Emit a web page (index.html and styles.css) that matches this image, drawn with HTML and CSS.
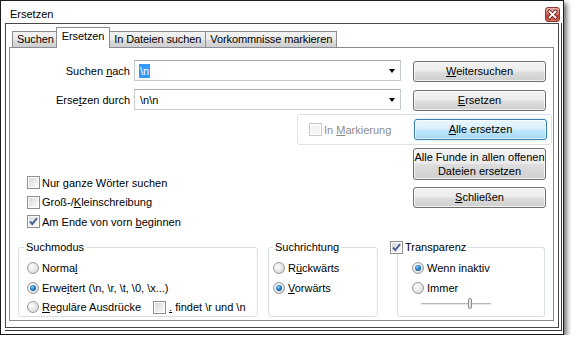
FILE: index.html
```html
<!DOCTYPE html>
<html lang="de">
<head>
    <meta charset="UTF-8">
    <title>Ersetzen</title>
    <link rel="stylesheet" href="styles.css">
</head>
<body>
    <div class="window">
        <!-- Titelleiste -->
        <div class="titlebar">
            <span class="title">Ersetzen</span>
            <span class="close-btn">
                <svg width="13" height="13" viewBox="0 0 13 13">
                    <path d="M3.5 3.5 L9.5 9.5 M9.5 3.5 L3.5 9.5" stroke="#6b2118" stroke-width="3.6" stroke-linecap="square"/>
                    <path d="M3.5 3.5 L9.5 9.5 M9.5 3.5 L3.5 9.5" stroke="#fff" stroke-width="1.8" stroke-linecap="square"/>
                </svg>
            </span>
        </div>

        <div class="frame-outer">
            <div class="frame">
                <!-- Reiter -->
                <div class="tabs">
                    <div class="tab">Suchen</div>
                    <div class="tab active">Ersetzen</div>
                    <div class="tab">In Dateien suchen</div>
                    <div class="tab">Vorkommnisse markieren</div>
                </div>

                <div class="panel">
                    <div class="main">
                        <div class="field-row">
                            <label class="field-label">Suchen <u>n</u>ach</label>
                            <div class="combo"><span class="selected-text">\n</span><span class="arrow"></span></div>
                            <button class="btn"><u>W</u>eitersuchen</button>
                        </div>
                        <div class="field-row second">
                            <label class="field-label">Erse<u>t</u>zen durch</label>
                            <div class="combo"><span class="combo-text">\n\n</span><span class="arrow"></span></div>
                            <button class="btn"><u>E</u>rsetzen</button>
                        </div>

                        <div class="mark-group">
                            <span class="check disabled"></span>
                            <span class="disabled-text">In <u>M</u>arkierung</span>
                            <button class="btn default"><u>A</u>lle ersetzen</button>
                        </div>

                        <div class="lower">
                            <div class="options">
                                <div class="option"><span class="check"></span><span>Nur <u>g</u>anze Wörter suchen</span></div>
                                <div class="option"><span class="check"></span><span>Groß-/<u>K</u>leinschreibung</span></div>
                                <div class="option">
                                    <span class="check">
                                        <svg width="11" height="11" viewBox="0 0 11 11"><path d="M2 5.5 L4.3 8 L9 2.2" fill="none" stroke="#4a5f97" stroke-width="1.9"/></svg>
                                    </span><span>Am Ende von vorn <u>b</u>eginnen</span>
                                </div>
                            </div>
                            <div class="side">
                                <button class="btn tall">Alle Funde in allen offenen<br>Dateien ersetzen</button>
                                <button class="btn"><u>S</u>chließen</button>
                            </div>
                        </div>
                    </div>

                    <!-- Gruppen unten -->
                    <div class="groups">
                        <fieldset class="group mode">
                            <legend>Suchmodus</legend>
                            <div class="option"><span class="radio"></span><span>Norma<u>l</u></span></div>
                            <div class="option"><span class="radio on"></span><span>Erwe<u>i</u>tert (\n, \r, \t, \0, \x...)</span></div>
                            <div class="option"><span class="radio"></span><span><u>R</u>eguläre Ausdrücke</span><span class="check dot-check"></span><span><u>.</u> findet \r und \n</span></div>
                        </fieldset>
                        <fieldset class="group direction">
                            <legend>Suchrichtung</legend>
                            <div class="option"><span class="radio"></span><span>R<u>ü</u>ckwärts</span></div>
                            <div class="option"><span class="radio on"></span><span><u>V</u>orwärts</span></div>
                        </fieldset>
                        <fieldset class="group transparency">
                            <legend>
                                <span class="check">
                                    <svg width="11" height="11" viewBox="0 0 11 11"><path d="M2 5.5 L4.3 8 L9 2.2" fill="none" stroke="#4a5f97" stroke-width="1.9"/></svg>
                                </span><span>Transparenz</span>
                            </legend>
                            <div class="option"><span class="radio on"></span><span>Wenn inaktiv</span></div>
                            <div class="option"><span class="radio"></span><span>Immer</span></div>
                            <div class="slider"><span class="thumb"></span></div>
                        </fieldset>
                    </div>
                </div>
            </div>
        </div>
    </div>
</body>
</html>
```

FILE: styles.css
```css
body {
    margin: 0;
    background-color: #fff;
    font-family: "Liberation Sans", Arial, sans-serif;
    font-size: 11px;
    color: #000;
}
u {
    text-decoration-thickness: 1px;
    text-underline-offset: 1px;
}
.window {
    width: 564px;
    height: 335px;
    box-sizing: border-box;
    border: 1px solid #1c1c1c;
    padding: 0 1px 3px 4px;
    background-color: #fff;
    box-shadow: 3px 3px 5px rgba(0, 0, 0, 0.55);
    display: flex;
    flex-direction: column;
}
.titlebar {
    height: 22px;
    flex: none;
    display: flex;
    align-items: flex-start;
    padding-left: 5px;
}
.title {
    padding-top: 6px;
    line-height: 14px;
}
.close-btn {
    margin: 6px 2px 0 auto;
    width: 15px;
    height: 15px;
    box-sizing: border-box;
    border: 1px solid #8a3a31;
    border-radius: 3px;
    background: linear-gradient(#eab0a6 0%, #d9776b 45%, #c4473a 55%, #cf6a5c 100%);
    display: flex;
    align-items: center;
    justify-content: center;
}
.frame-outer {
    flex: 1;
    display: flex;
    border-right: 1px solid #3a3a3a;
    border-bottom: 1px solid #3a3a3a;
    padding: 0 2px 2px 0;
}
.frame {
    flex: 1;
    display: flex;
    flex-direction: column;
    border: 1px solid #474747;
    padding: 0 4px 6px 3px;
}

/* Reiter */
.tabs {
    display: flex;
    align-items: flex-end;
    height: 23px;
    padding-left: 3px;
    letter-spacing: -0.1px;
}
.tab {
    height: 15px;
    line-height: 15px;
    padding: 0 4px;
    border: 1px solid #898c95;
    border-bottom: none;
    margin-right: -1px;
    background: linear-gradient(#f3f3f3 0%, #ebebeb 50%, #dddddd 51%, #cfcfcf 100%);
}
.tab.active {
    height: 20px;
    line-height: 17px;
    margin: 0 -1px -1px -2px;
    padding: 0 5px;
    background: #fff;
    position: relative;
    z-index: 1;
}
.panel {
    flex: 1;
    border: 1px solid #898c95;
    background-color: #fff;
}

/* Eingabezeilen und Knöpfe */
.main {
    width: 536px;
    margin-top: 12px;
}
.field-row {
    display: flex;
    align-items: center;
    height: 21px;
}
.field-row.second {
    margin-top: 8px;
}
.field-label {
    width: 120px;
    margin-right: 4px;
    text-align: right;
}
.combo {
    width: 267px;
    height: 21px;
    box-sizing: border-box;
    border: 1px solid #c5cbd3;
    border-top-color: #abadb3;
    display: flex;
    align-items: center;
    padding-left: 4px;
}
.selected-text {
    background-color: #3399ff;
    color: #fff;
    padding: 0 1px;
    line-height: 14px;
}
.combo-text {
    padding-left: 1px;
}
.arrow {
    margin: 1px 5px 0 auto;
    border-left: 3.5px solid transparent;
    border-right: 3.5px solid transparent;
    border-top: 4px solid #000;
}
.btn {
    width: 133px;
    height: 21px;
    margin: 1px 0 0 12px;
    padding: 0;
    border: 1px solid #707070;
    border-radius: 3px;
    background: linear-gradient(#f3f3f3 0%, #ebebeb 48%, #dddddd 52%, #cfcfcf 100%);
    box-shadow: inset 0 0 0 1px rgba(255, 255, 255, 0.7);
    font: inherit;
    color: #000;
    line-height: 15px;
}
.btn.default {
    border-color: #3c7fb1;
    background: linear-gradient(#eaf6fd 0%, #d9f0fc 48%, #bee6fd 52%, #a7d9f5 100%);
    box-shadow: inset 0 0 0 1px rgba(255, 255, 255, 0.6), 0 0 2px #9fd5f7;
}
.btn.tall {
    height: 32px;
    line-height: 14px;
    margin: 0;
}
.mark-group {
    width: 255px;
    height: 31px;
    box-sizing: border-box;
    margin: 4px 0 0 287px;
    border: 1px solid #dce2e8;
    border-radius: 3px;
    display: flex;
    align-items: center;
    padding: 0 4px 0 11px;
}
.mark-group .btn {
    margin: 0 0 0 auto;
}
.disabled-text {
    color: #8d8d8d;
}
.lower {
    display: flex;
    margin-top: 3px;
}
.options {
    margin-left: 17px;
    padding-top: 25px;
}
.option {
    height: 19.5px;
    display: flex;
    align-items: center;
    white-space: nowrap;
}
.side {
    margin-left: auto;
    display: flex;
    flex-direction: column;
    gap: 7px;
}
.side .btn {
    margin: 0;
}

/* Kästchen und Optionsfelder */
.check {
    width: 13px;
    height: 13px;
    box-sizing: border-box;
    border: 1px solid #8e8f8f;
    background: linear-gradient(135deg, #d6d6d6 0%, #f2f2f2 70%, #fdfdfd 100%);
    box-shadow: inset 0 0 0 1px #fff;
    margin-right: 2px;
    flex: none;
    display: flex;
    align-items: center;
    justify-content: center;
}
.check.disabled {
    border-color: #c9c9c9;
    background: #f4f4f4;
}
.check.dot-check {
    margin: 0 3px 0 12px;
}
.radio {
    width: 12px;
    height: 12px;
    box-sizing: border-box;
    border-radius: 50%;
    border: 1px solid #9a9a9a;
    background: radial-gradient(circle at 35% 35%, #fbfbfb 0%, #e6e6e6 55%, #cdcdcd 100%);
    margin-right: 3px;
    flex: none;
    display: flex;
    align-items: center;
    justify-content: center;
}
.radio.on::after {
    content: "";
    width: 6px;
    height: 6px;
    border-radius: 50%;
    background: radial-gradient(circle at 40% 35%, #8fd0f6 0%, #2a7fc4 45%, #0b3f7a 100%);
}

/* Gruppen */
.groups {
    display: flex;
    margin: 9px 0 0 8px;
}
.group {
    height: 76px;
    box-sizing: border-box;
    margin: 0;
    padding: 5px 0 0 8px;
    min-inline-size: 0;
    border: 1px solid #d5dfe5;
    border-radius: 3px;
}
.group legend {
    padding: 0 2px;
    margin-left: -3px;
    line-height: 13px;
    height: 13px;
}
.mode {
    width: 240px;
}
.direction {
    width: 110px;
    margin-left: 10px;
    padding-left: 4px;
}
.direction legend {
    margin-left: 0;
}
.transparency {
    width: 148px;
    margin-left: 19px;
    padding-left: 14px;
}
.transparency legend {
    display: flex;
    align-items: center;
    margin-left: -22px;
    padding: 0 2px 0 0;
}
.slider {
    width: 70px;
    height: 12px;
    margin-left: 9px;
    display: flex;
    align-items: center;
    background: linear-gradient(transparent 5px, #b7b7b7 5px, #b7b7b7 6px, #e8e8e8 6px, #e8e8e8 7px, transparent 7px);
}
.thumb {
    width: 4px;
    height: 11px;
    box-sizing: border-box;
    margin-left: 47px;
    border: 1px solid #8a8a8a;
    border-radius: 2px;
    background: linear-gradient(90deg, #f4f4f4, #dcdcdc);
}
```
